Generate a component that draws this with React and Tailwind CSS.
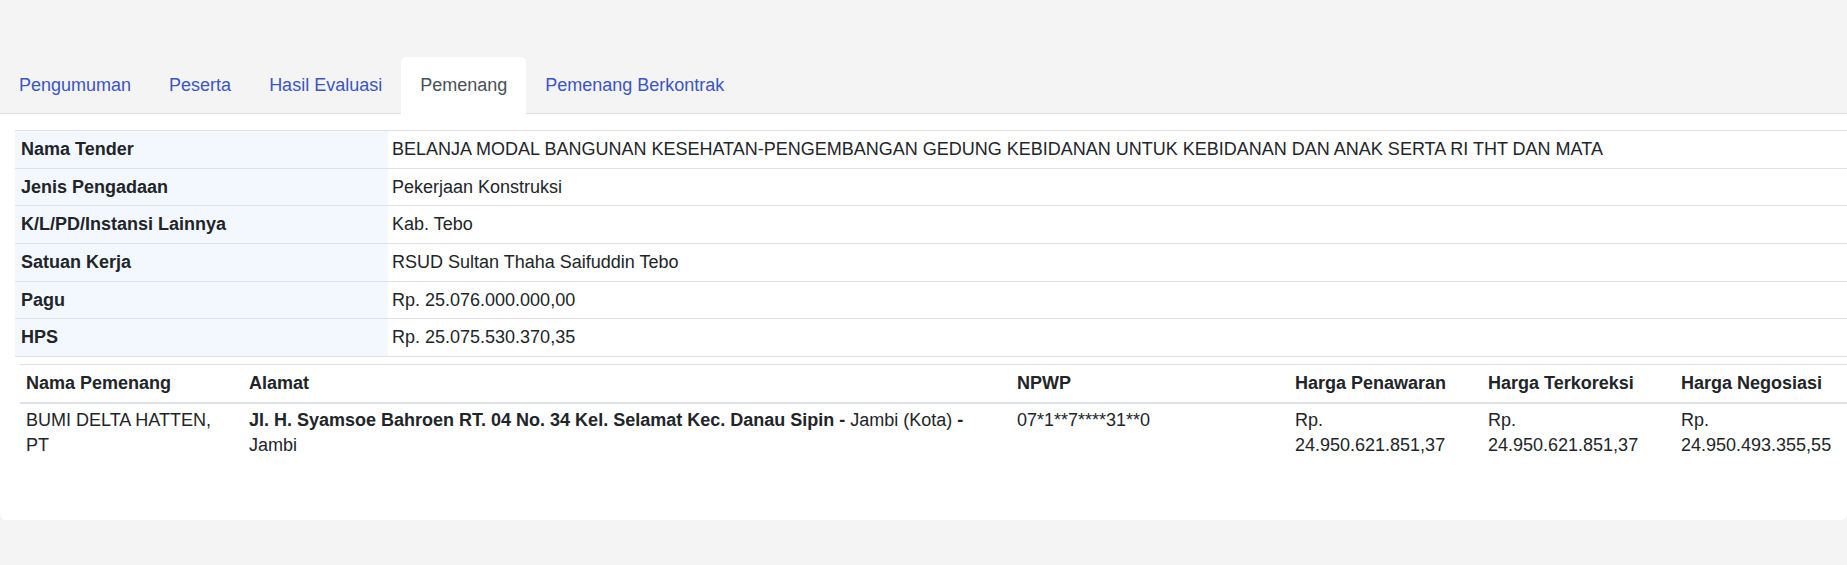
const tabs = ["Pengumuman", "Peserta", "Hasil Evaluasi", "Pemenang", "Pemenang Berkontrak"];

const tender = [
  ["Nama Tender", "BELANJA MODAL BANGUNAN KESEHATAN-PENGEMBANGAN GEDUNG KEBIDANAN UNTUK KEBIDANAN DAN ANAK SERTA RI THT DAN MATA"],
  ["Jenis Pengadaan", "Pekerjaan Konstruksi"],
  ["K/L/PD/Instansi Lainnya", "Kab. Tebo"],
  ["Satuan Kerja", "RSUD Sultan Thaha Saifuddin Tebo"],
  ["Pagu", "Rp. 25.076.000.000,00"],
  ["HPS", "Rp. 25.075.530.370,35"],
];

function Amount({ value }) {
  return <div className="max-w-[165px]">Rp. {value}</div>;
}

export default function App() {
  const active = "Pemenang";

  return (
    <div className="min-h-[565px] bg-[#f4f4f5] pt-[57px] font-['Liberation_Sans',Arial,sans-serif] text-[18px] leading-[25px] text-[#212529]">
      {/* Tab strip */}
      <ul className="flex border-b border-[#dee2e6]">
        {tabs.map(t => (
          <li key={t} className="-mb-px">
            <a
              className={`block px-[19px] py-[16px] rounded-t-[5px] ${
                t === active ? "bg-white text-[#495057]" : "text-[#3a56c2]"
              }`}
            >
              {t}
            </a>
          </li>
        ))}
      </ul>

      {/* Content card */}
      <div className="bg-white rounded-b-[6px] pt-[16px] pl-[15px] pb-[56px]">
        <table className="w-full table-fixed border-collapse">
          <colgroup>
            <col className="w-[373px]" />
            <col />
          </colgroup>
          <tbody>
            {tender.map(([label, value]) => (
              <tr key={label} className="border-t border-b border-[#dee2e6]">
                <th className="bg-[#f3f8fe] px-[6px] py-[5.85px] text-left font-bold">{label}</th>
                <td className="px-[4px] py-[5.85px]">{value}</td>
              </tr>
            ))}
          </tbody>
        </table>

        {/* Winner list */}
        <div className="pl-[5px] mt-[7px]">
          <table className="w-full table-fixed border-collapse">
            <colgroup>
              <col className="w-[223px]" />
              <col className="w-[768px]" />
              <col className="w-[278px]" />
              <col className="w-[193px]" />
              <col className="w-[193px]" />
              <col />
            </colgroup>
            <thead>
              <tr className="border-t border-[#dee2e6]">
                {["Nama Pemenang", "Alamat", "NPWP", "Harga Penawaran", "Harga Terkoreksi", "Harga Negosiasi"].map(h => (
                  <th key={h} className="px-[6px] py-[5.85px] text-left font-bold border-b-2 border-[#dee2e6] whitespace-nowrap">
                    {h}
                  </th>
                ))}
              </tr>
            </thead>
            <tbody>
              <tr className="align-top">
                <td className="px-[6px] pt-[4px] pb-[6px]">
                  <div className="max-w-[200px]">BUMI DELTA HATTEN, PT</div>
                </td>
                <td className="px-[6px] pt-[4px] pb-[6px]">
                  <div className="max-w-[740px]">
                    <b>Jl. H. Syamsoe Bahroen RT. 04 No. 34 Kel. Selamat Kec. Danau Sipin</b> <b>-</b> Jambi (Kota){" "}
                    <b>-</b> Jambi
                  </div>
                </td>
                <td className="px-[6px] pt-[4px] pb-[6px]">07*1**7****31**0</td>
                <td className="px-[6px] pt-[4px] pb-[6px]"><Amount value="24.950.621.851,37" /></td>
                <td className="px-[6px] pt-[4px] pb-[6px]"><Amount value="24.950.621.851,37" /></td>
                <td className="px-[6px] pt-[4px] pb-[6px]"><Amount value="24.950.493.355,55" /></td>
              </tr>
            </tbody>
          </table>
        </div>
      </div>
    </div>
  );
}
